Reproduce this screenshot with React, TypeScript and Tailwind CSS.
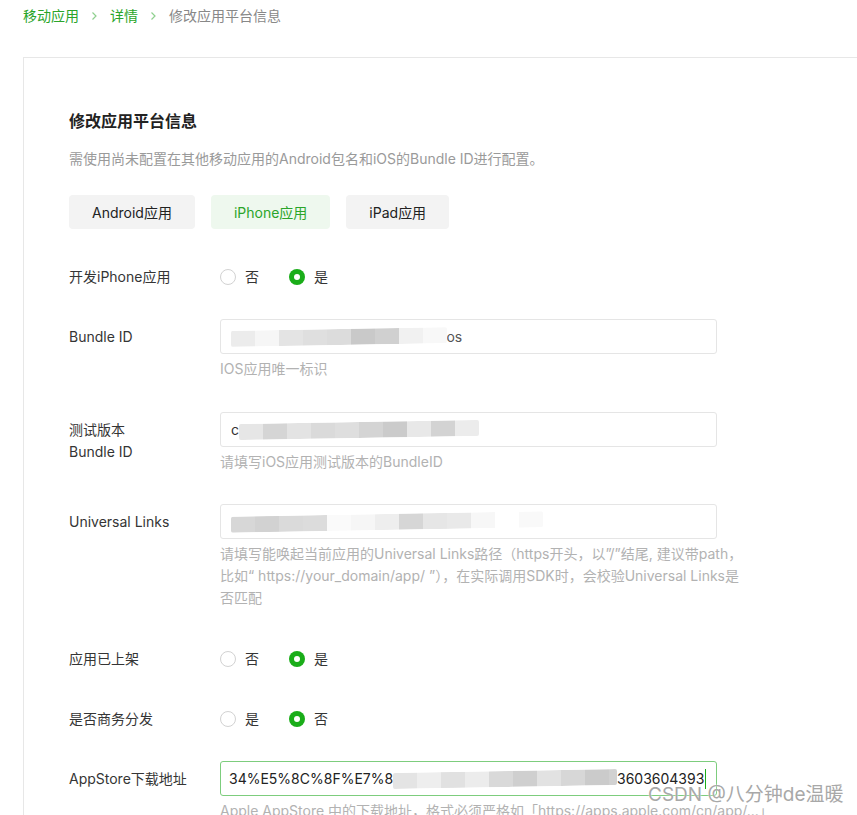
import { ReactNode } from "react";

type Block = [number, string];

const bundleMosaic: Block[] = [
  [24, "#ececec"],
  [24, "#f6f6f6"],
  [24, "#e4e4e4"],
  [24, "#dfdfdf"],
  [24, "#dcdcdc"],
  [24, "#c9c9c9"],
  [24, "#d0d0d0"],
  [24, "#f1f1f1"],
  [24, "#f8f8f8"],
];

const testMosaic: Block[] = [
  [24, "#e6e6e6"],
  [24, "#d5d5d5"],
  [24, "#e3e3e3"],
  [24, "#dadada"],
  [24, "#dedede"],
  [24, "#d4d4d4"],
  [24, "#cbcbcb"],
  [24, "#e8e8e8"],
  [24, "#d3d3d3"],
  [24, "#ececec"],
];

const linkMosaic: Block[] = [
  [24, "#d7d7d7"],
  [24, "#d2d2d2"],
  [24, "#dadada"],
  [24, "#dcdcdc"],
  [24, "#fafafa"],
  [24, "#f6f6f6"],
  [24, "#eeeeee"],
  [24, "#d6d6d6"],
  [24, "#e6e6e6"],
  [24, "#e9e9e9"],
  [24, "#f7f7f7"],
  [24, "#ffffff"],
  [24, "#f9f9f9"],
];

const storeMosaic: Block[] = [
  [24, "#e4e4e4"],
  [24, "#eeeeee"],
  [24, "#e1e1e1"],
  [24, "#ececec"],
  [24, "#d9d9d9"],
  [24, "#cfcfcf"],
  [24, "#e2e2e2"],
  [24, "#d7d7d7"],
  [24, "#cbcbcb"],
  [24, "#d1d1d1"],
  [24, "#e6e6e6"],
  [24, "#f2f2f2"],
  [24, "#c8c8c8"],
  [24, "#ececec"],
];

function Mosaic({ blocks }: { blocks: Block[] }) {
  return (
    <div className="flex h-[16px] -skew-y-1 overflow-hidden rounded-[2px]">
      {blocks.map(([w, c], i) => (
        <span key={i} className="h-full shrink-0" style={{ width: w, background: c }} />
      ))}
    </div>
  );
}

function Chevron() {
  return (
    <svg width="7" height="10" viewBox="0 0 7 10" className="mx-[12px]">
      <path d="M1.5 1.5 5 5l-3.5 3.5" fill="none" stroke="#8fd08f" strokeWidth="1.2" />
    </svg>
  );
}

function Radio({ checked, label }: { checked: boolean; label: string }) {
  return (
    <span className="flex items-center">
      {checked ? (
        <span className="flex h-[16px] w-[16px] items-center justify-center rounded-full bg-[#1aad19]">
          <span className="h-[6px] w-[6px] rounded-full bg-white" />
        </span>
      ) : (
        <span className="h-[16px] w-[16px] rounded-full border border-[#d2d2d2] bg-white" />
      )}
      <span className="ml-[9px] text-[14px] leading-[22px] text-[#353535]">{label}</span>
    </span>
  );
}

function RadioRow({ label, options, selected }: { label: string; options: string[]; selected: number }) {
  return (
    <div className="flex items-center">
      <div className="w-[151px] text-[14px] leading-[22px] text-[#353535]">{label}</div>
      <div className="flex gap-[30px]">
        {options.map((o, i) => (
          <Radio key={o} label={o} checked={i === selected} />
        ))}
      </div>
    </div>
  );
}

function FieldRow({ label, children, hint }: { label: ReactNode; children: ReactNode; hint?: ReactNode }) {
  return (
    <div className="flex">
      <div className="w-[151px] pt-[7px] text-[14px] leading-[22px] text-[#353535]">{label}</div>
      <div>
        {children}
        {hint ? <div className="mt-[4px] text-[14px] leading-[22px] text-[#b2b2b2]">{hint}</div> : null}
      </div>
    </div>
  );
}

function Input({ children, focused }: { children: ReactNode; focused?: boolean }) {
  return (
    <div
      className={
        focused
          ? "flex h-[35px] w-[497px] items-center overflow-hidden rounded-[3px] border border-[#7dcd7d] bg-white pl-[10px] pr-[10px] text-[14px] text-[#222]"
          : "flex h-[35px] w-[497px] items-center overflow-hidden rounded-[3px] border border-[#e5e5e5] bg-white pl-[10px] pr-[10px] text-[14px] text-[#222]"
      }
    >
      {children}
    </div>
  );
}

export default function App() {
  return (
    <div className="relative h-[815px] overflow-hidden bg-white font-['Inter','Noto_Sans_CJK_SC',sans-serif]">
      <nav className="flex items-center pl-[23px] pt-[6px] text-[14px] leading-[20px]">
        <span className="text-[#2aa52a]">移动应用</span>
        <Chevron />
        <span className="text-[#2aa52a]">详情</span>
        <Chevron />
        <span className="text-[#888]">修改应用平台信息</span>
      </nav>

      <section className="ml-[23px] mt-[31px] border-l border-t border-[#e7e7e7] pl-[45px] pt-[51px]">
        <h1 className="text-[16px] font-semibold leading-[24px] text-[#222]">修改应用平台信息</h1>
        <p className="mt-[15px] text-[14px] leading-[22px] text-[#9a9a9a]">
          需使用尚未配置在其他移动应用的Android包名和iOS的Bundle ID进行配置。
        </p>

        <div className="mt-[25px] flex gap-[16px]">
          <button className="h-[34px] rounded-[4px] bg-[#f3f3f3] px-[23px] text-[14px] text-[#222]">Android应用</button>
          <button className="h-[34px] rounded-[4px] bg-[#eef8ee] px-[23px] text-[14px] text-[#2aa52a]">iPhone应用</button>
          <button className="h-[34px] rounded-[4px] bg-[#f3f3f3] px-[23px] text-[14px] text-[#222]">iPad应用</button>
        </div>

        <div className="mt-[37px]">
          <RadioRow label="开发iPhone应用" options={["否", "是"]} selected={1} />
        </div>

        <div className="mt-[31px]">
          <FieldRow label="Bundle ID" hint="IOS应用唯一标识">
            <Input>
              <Mosaic blocks={bundleMosaic} />
              <span className="ml-[-8px] text-[#555]">.ios</span>
            </Input>
          </FieldRow>
        </div>

        <div className="mt-[32px]">
          <FieldRow
            label={
              <>
                测试版本
                <br />
                Bundle ID
              </>
            }
            hint="请填写iOS应用测试版本的BundleID"
          >
            <Input>
              <span className="text-[#333]">c</span>
              <Mosaic blocks={testMosaic} />
            </Input>
          </FieldRow>
        </div>

        <div className="mt-[31px]">
          <FieldRow
            label="Universal Links"
            hint={
              <>
                <div className="whitespace-nowrap">
                  请填写能唤起当前应用的Universal Links路径（https开头，以”/”结尾, 建议带path，
                </div>
                <div className="whitespace-nowrap">
                  比如“ https://your_domain/app/ ”），在实际调用SDK时，会校验Universal Links是
                </div>
                <div>否匹配</div>
              </>
            }
          >
            <Input>
              <Mosaic blocks={linkMosaic} />
            </Input>
          </FieldRow>
        </div>

        <div className="mt-[39px]">
          <RadioRow label="应用已上架" options={["否", "是"]} selected={1} />
        </div>

        <div className="mt-[38px]">
          <RadioRow label="是否商务分发" options={["是", "否"]} selected={1} />
        </div>

        <div className="mt-[31px]">
          <FieldRow
            label="AppStore下载地址"
            hint={
              <span className="whitespace-nowrap">
                Apple AppStore 中的下载地址，格式必须严格如「https://apps.apple.com/cn/app/...」
              </span>
            }
          >
            <Input focused>
              <span className="-ml-[2px] whitespace-nowrap">34%E5%8C%8F%E7%8</span>
              <Mosaic blocks={storeMosaic} />
              <span className="ml-auto whitespace-nowrap">3603604393</span>
              <span className="ml-[1px] h-[20px] w-px bg-[#1aad19]" />
            </Input>
          </FieldRow>
        </div>
      </section>

      <div className="pointer-events-none absolute left-[648px] top-[782px] whitespace-nowrap text-[19px] leading-[26px] text-[#a8a8a8] [text-shadow:0_0_2px_#fff]">
        CSDN @八分钟de温暖
      </div>
    </div>
  );
}
